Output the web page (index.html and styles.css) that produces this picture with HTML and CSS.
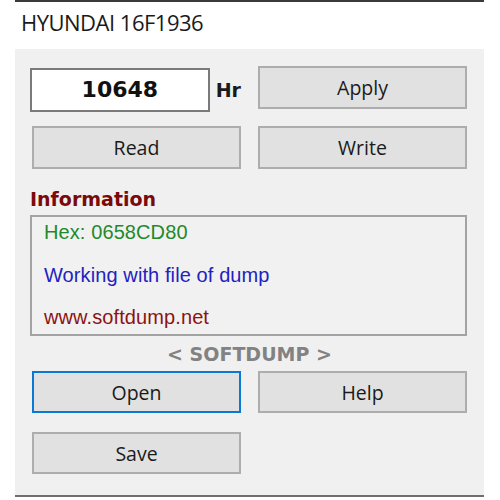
FILE: index.html
```html
<!DOCTYPE html>
<html>
<head>
<meta charset="utf-8">
<link rel="stylesheet" href="styles.css">
</head>
<body>
<div class="topline"></div>
<div class="title">HYUNDAI 16F1936</div>
<div class="panel">
  <div class="grid">
    <div class="hours">
      <div class="field">10648</div>
      <span class="unit">Hr</span>
    </div>
    <div class="btn">Apply</div>
    <div class="btn">Read</div>
    <div class="btn">Write</div>
  </div>
  <div class="heading">Information</div>
  <div class="info">
    <div class="line green">Hex: 0658CD80</div>
    <div class="line blue">Working with file of dump</div>
    <div class="line red">www.softdump.net</div>
  </div>
  <div class="brand">&lt; SOFTDUMP &gt;</div>
  <div class="grid bottom">
    <div class="btn focus">Open</div>
    <div class="btn">Help</div>
    <div class="btn">Save</div>
  </div>
</div>
</body>
</html>
```

FILE: styles.css
```css
html, body {
  margin: 0;
  padding: 0;
  background: #ffffff;
  width: 500px;
  height: 500px;
  overflow: hidden;
}

.topline {
  margin-left: 15px;
  width: 469px;
  height: 2px;
  background: #3a3a3a;
}

.title {
  height: 47px;
  box-sizing: border-box;
  padding: 6px 0 0 21px;
  font-family: "Open Sans", sans-serif;
  font-size: 22px;
  line-height: 29px;
  letter-spacing: -0.5px;
  color: #1a1a1a;
}

.panel {
  margin-left: 15px;
  width: 469px;
  height: 446px;
  box-sizing: border-box;
  background: #f0f0f0;
  padding: 17px 0 0 17px;
  border-bottom: 2px solid #6e6e6e;
  height: 448px;
}

.grid {
  display: grid;
  grid-template-columns: 209px 209px;
  grid-auto-rows: 43px;
  column-gap: 17px;
  row-gap: 17px;
}

.hours {
  display: flex;
  align-items: center;
  margin-left: -2px;
}

.field {
  width: 182px;
  height: 44px;
  margin-top: 4px;
  box-sizing: border-box;
  border: 2px solid #7a7a7a;
  background: #ffffff;
  display: flex;
  align-items: center;
  justify-content: center;
  font-family: "DejaVu Sans", sans-serif;
  font-weight: bold;
  font-size: 22px;
  color: #111111;
}

.unit {
  margin-left: 6px;
  margin-top: 4px;
  font-family: "DejaVu Sans", sans-serif;
  font-weight: bold;
  font-size: 19px;
  color: #1a1a1a;
}

.btn {
  box-sizing: border-box;
  border: 2px solid #adadad;
  background: #e1e1e1;
  display: flex;
  align-items: center;
  justify-content: center;
  font-family: "Open Sans", sans-serif;
  font-size: 19.5px;
  color: #1a1a1a;
}

.btn.focus {
  border-color: #0a78d4;
}

.heading {
  margin: 19px 0 0 -2px;
  height: 22px;
  font-family: "DejaVu Sans", sans-serif;
  font-weight: bold;
  font-size: 19px;
  line-height: 22px;
  color: #7a0a0a;
}

.info {
  margin: 5px 0 0 -2px;
  width: 437px;
  height: 121px;
  box-sizing: border-box;
  border: 2px solid #a3a3a3;
  background: #f1f1f1;
  padding: 4px 0 0 12px;
  display: flex;
  flex-direction: column;
  gap: 20.5px;
}

.line {
  height: 22px;
  font-family: "Liberation Sans", sans-serif;
  font-size: 20px;
  line-height: 22px;
  letter-spacing: 0.1px;
}

.green { color: #1f8a2a; }
.blue { color: #2222c0; }
.red { color: #8a1414; }

.brand {
  margin-top: 5px;
  width: 435px;
  text-align: center;
  height: 26px;
  font-family: "DejaVu Sans", sans-serif;
  font-weight: bold;
  font-size: 19px;
  line-height: 26px;
  color: #828282;
}

.bottom {
  margin-top: 4px;
  grid-auto-rows: 42px;
  row-gap: 19px;
}
```
